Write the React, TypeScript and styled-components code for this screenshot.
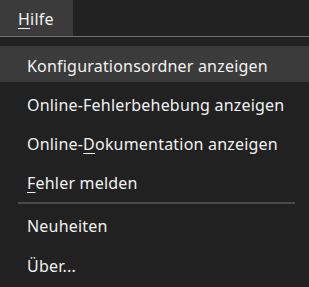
import React from "react";
import styled, { createGlobalStyle } from "styled-components";

const GlobalStyle = createGlobalStyle`
  html, body {
    margin: 0;
    padding: 0;
    background: #212121;
    font-family: "Noto Sans", "Open Sans", sans-serif;
  }
`;

type Item = { label: string; mnemonic?: number; active?: boolean };

const groups: Item[][] = [
  [
    { label: "Konfigurationsordner anzeigen", active: true },
    { label: "Online-Fehlerbehebung anzeigen" },
    { label: "Online-Dokumentation anzeigen", mnemonic: 7 },
    { label: "Fehler melden", mnemonic: 0 },
  ],
  [{ label: "Neuheiten" }, { label: "Über..." }],
];

const renderLabel = (label: string, mnemonic?: number) => {
  if (mnemonic === undefined) return label;
  return (
    <>
      {label.slice(0, mnemonic)}
      <u>{label[mnemonic]}</u>
      {label.slice(mnemonic + 1)}
    </>
  );
};

const App = () => {
  return (
    <Page>
      <GlobalStyle />
      <MenuBar>
        <Tab>
          <u>H</u>ilfe
        </Tab>
      </MenuBar>
      <Dropdown>
        {groups.map((group, gi) => (
          <React.Fragment key={gi}>
            {gi > 0 && <Separator />}
            <Group $gap={gi > 0 ? 4 : 3}>
              {group.map((item) => (
                <Row key={item.label} $active={item.active}>
                  {renderLabel(item.label, item.mnemonic)}
                </Row>
              ))}
            </Group>
          </React.Fragment>
        ))}
      </Dropdown>
    </Page>
  );
};

const Page = styled.div`
  width: 309px;
  height: 287px;
  background: #212121;
  color: #f2f2f2;
  overflow: hidden;
`;

const MenuBar = styled.div`
  display: flex;
  height: 36px;
  background: #222222;
  border-bottom: 1px solid #6f6f6f;
`;

const Tab = styled.div`
  width: 73px;
  display: flex;
  align-items: center;
  padding: 2px 0 0 18px;
  box-sizing: border-box;
  background: #3b3b3b;
  font-size: 16px;
  letter-spacing: 0.2px;

  u {
    text-underline-offset: 3px;
  }
`;

const Dropdown = styled.div`
  display: flex;
  flex-direction: column;
  padding-top: 9px;
`;

const Group = styled.div<{ $gap: number }>`
  display: flex;
  flex-direction: column;
  gap: ${(p) => p.$gap}px;
`;

const Row = styled.div<{ $active?: boolean }>`
  height: 36px;
  box-sizing: border-box;
  display: flex;
  align-items: center;
  padding: 3px 0 0 27px;
  font-size: 16px;
  letter-spacing: 0.2px;
  white-space: nowrap;
  background: ${(p) => (p.$active ? "#3b3b3b" : "transparent")};

  u {
    text-underline-offset: 3px;
  }
`;

const Separator = styled.div`
  height: 2px;
  margin: 3px 14px 2px 18px;
  background: #4a4a4a;
`;

export default App;
